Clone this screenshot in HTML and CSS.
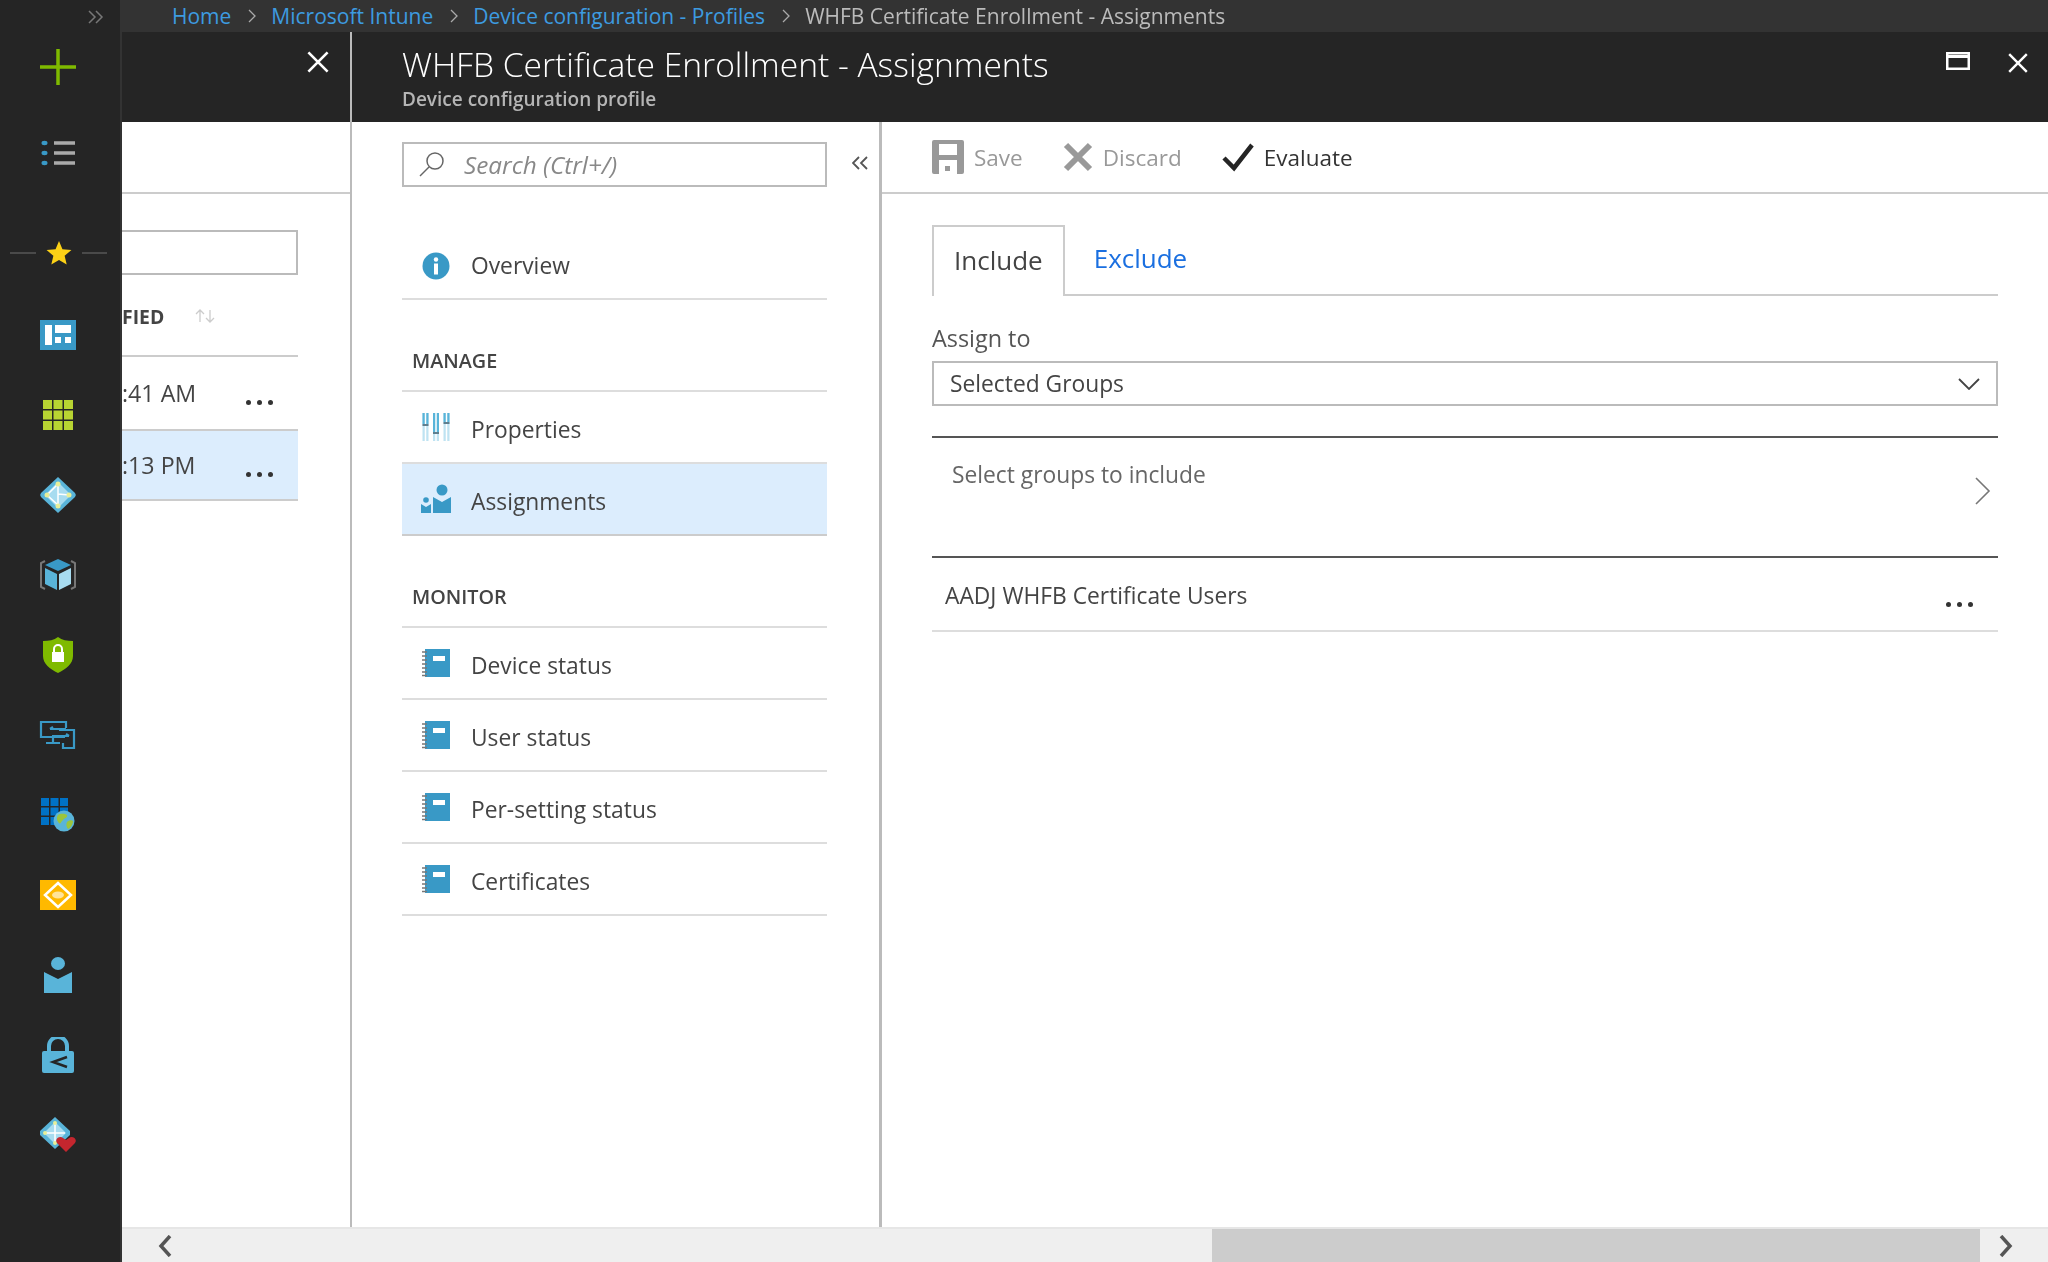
FILE: index.html
```html
<!DOCTYPE html>
<html lang="en">
<head>
  <meta charset="UTF-8">
  <title>WHFB Certificate Enrollment - Assignments</title>
  <link rel="stylesheet" href="styles.css">
</head>
<body>
  <svg class="sprites" width="0" height="0">
    <symbol id="notebook" viewBox="0 0 28 28">
      <rect x="3" y="0" width="25" height="28" fill="#3999c6"/>
      <path d="M0 3h5M0 7h5M0 11h5M0 15h5M0 19h5M0 23h5M0 26.500h5" stroke="#777" stroke-width="1.500"/>
      <rect x="11" y="7" width="12" height="5" fill="#fff"/>
    </symbol>
  </svg>

  <!-- Left icon rail -->
  <nav class="rail">
    <div class="rail-expand">
      <svg width="18" height="14" viewBox="0 0 18 14" fill="none" stroke="#777" stroke-width="1.500"><path d="M1 1l6 6-6 6M8 1l6 6-6 6"/></svg>
    </div>
    <div class="rail-item rail-plus">
      <svg width="36" height="36" viewBox="0 0 36 36"><path d="M0 18h36M18 0v36" stroke="#7fba00" stroke-width="3.500"/></svg>
    </div>
    <div class="rail-item rail-list">
      <svg width="34" height="26" viewBox="0 0 34 26">
        <g fill="#3999c6"><ellipse cx="3.500" cy="3" rx="3" ry="2.200"/><ellipse cx="3.500" cy="13" rx="3" ry="2.200"/><ellipse cx="3.500" cy="23" rx="3" ry="2.200"/></g>
        <path d="M13 3h21M13 13h21M13 23h21" stroke="#aaa" stroke-width="3.500"/>
      </svg>
    </div>
    <div class="rail-fav">
      <span class="rail-rule"></span>
      <svg width="26" height="26" viewBox="0 0 24 24"><path d="M12 1l3.200 7.500 8.300.7-6.300 5.400 1.900 8.100L12 18.500 4.900 22.700l1.900-8.100L.5 9.200l8.300-.7z" fill="#fcd116"/></svg>
      <span class="rail-rule"></span>
    </div>
    <div class="rail-item rail-first">
      <svg width="36" height="30" viewBox="0 0 36 30">
        <rect width="36" height="30" fill="#3999c6"/>
        <g fill="#fff"><rect x="5" y="5" width="7" height="20"/><rect x="15" y="5" width="16" height="8"/><rect x="15" y="17" width="6" height="6"/><rect x="25" y="17" width="6" height="6"/></g>
      </svg>
    </div>
    <div class="rail-item">
      <svg width="30" height="30" viewBox="0 0 30 30" fill="#b8d432">
        <rect width="9" height="9"/><rect x="10.500" width="9" height="9"/><rect x="21" width="9" height="9"/>
        <rect y="10.500" width="9" height="9"/><rect x="10.500" y="10.500" width="9" height="9"/><rect x="21" y="10.500" width="9" height="9"/>
        <rect y="21" width="9" height="9"/><rect x="10.500" y="21" width="9" height="9"/><rect x="21" y="21" width="9" height="9"/>
      </svg>
    </div>
    <div class="rail-item">
      <svg width="38" height="36" viewBox="0 0 38 36">
        <path d="M19 0l17 16a3 3 0 010 4L19 36 2 20a3 3 0 010-4z" fill="#59b4d9"/>
        <path d="M19 5l13 13-13 13L6 18z" fill="#a8dcf0"/>
        <path d="M19 7v21M8 18l11-11M8 18l11 10M19 17l11 1" stroke="#fff" stroke-width="1.500" fill="none"/>
        <g fill="#e8ef9a"><circle cx="19" cy="7" r="2.500"/><circle cx="8" cy="18" r="2.500"/><circle cx="30" cy="18" r="2.500"/><circle cx="19" cy="29" r="2.500"/></g>
      </svg>
    </div>
    <div class="rail-item">
      <svg width="38" height="34" viewBox="0 0 38 34">
        <path d="M6 3L2 5v24l4 2M32 3l4 2v24l-4 2" fill="none" stroke="#777" stroke-width="2"/>
        <path d="M19 1l13 6-13 6L6 7z" fill="#3999c6"/>
        <path d="M6 10l12 6v16L6 26z" fill="#59b4d9"/>
        <path d="M32 10l-12 6v16l12-6z" fill="#a8dcf0"/>
      </svg>
    </div>
    <div class="rail-item">
      <svg width="30" height="36" viewBox="0 0 30 36">
        <path d="M15 0c4 3 9 4 15 4v15c0 8-7 13-15 17C7 32 0 27 0 19V4c6 0 11-1 15-4z" fill="#7fba00"/>
        <rect x="9" y="15" width="12" height="10" fill="#fff"/>
        <path d="M11 15v-3a4 4 0 018 0v3" fill="none" stroke="#fff" stroke-width="2"/>
      </svg>
    </div>
    <div class="rail-item">
      <svg width="37" height="30" viewBox="0 0 37 30" fill="none" stroke="#3999c6" stroke-width="2.200">
        <path d="M26 17H2V2h25v6M14 17v5M7 23h14"/>
        <path d="M20 10h15v18H24v-5"/>
        <path d="M11 9h16M11 9l3-2M30 16H15l-2 0M30 16l-3-2"/>
      </svg>
    </div>
    <div class="rail-item">
      <svg width="34" height="34" viewBox="0 0 34 34">
        <g fill="#0072c6">
          <rect width="8" height="8"/><rect x="9.500" width="8" height="8"/><rect x="19" width="8" height="8"/>
          <rect y="9.500" width="8" height="8"/><rect x="9.500" y="9.500" width="8" height="8"/><rect x="19" y="9.500" width="8" height="8"/>
          <rect y="19" width="8" height="8"/><rect x="9.500" y="19" width="8" height="8"/>
        </g>
        <circle cx="23" cy="23" r="10.500" fill="#59b4d9"/>
        <path d="M17 17c3-2 7-1 9 0 1 3-3 3-4 5-2 1-2 5-4 3-2-2-3-5-1-8zM26 24c2-2 5-2 6-1 0 3-2 7-5 8-2-2-2-5-1-7z" fill="#9bc53d"/>
      </svg>
    </div>
    <div class="rail-item">
      <svg width="36" height="30" viewBox="0 0 36 30">
        <rect width="36" height="30" fill="#ffb900"/>
        <path d="M18 3l13 12-13 12L5 15z" fill="none" stroke="#fff" stroke-width="2.500"/>
        <ellipse cx="18" cy="15" rx="6" ry="3.500" fill="#ffe49a"/>
      </svg>
    </div>
    <div class="rail-item">
      <svg width="28" height="36" viewBox="0 0 28 36" fill="#59b4d9">
        <ellipse cx="14" cy="6.500" rx="7" ry="6.500"/>
        <path d="M0 15l14 7 14-7v21H0z"/>
      </svg>
    </div>
    <div class="rail-item">
      <svg width="32" height="36" viewBox="0 0 32 36">
        <path d="M7 16V9a9 9 0 0118 0v7" fill="none" stroke="#59b4d9" stroke-width="4"/>
        <rect y="14" width="32" height="22" rx="2" fill="#59b4d9"/>
        <path d="M25 20L11 25l14 5" fill="none" stroke="#252525" stroke-width="2.500"/>
      </svg>
    </div>
    <div class="rail-item">
      <svg width="38" height="36" viewBox="0 0 38 36">
        <path d="M16 0l15 14v4L16 32 1 18v-4z" fill="#59b4d9"/>
        <path d="M16 5l11 11-11 11L5 16z" fill="#a8dcf0"/>
        <path d="M16 6v20M6 16h20" stroke="#fff" stroke-width="1.500"/>
        <g fill="#e8ef9a"><circle cx="16" cy="6" r="2"/><circle cx="6" cy="16" r="2"/><circle cx="16" cy="26" r="2"/></g>
        <path d="M27 35l-9-9c-3-4 3-8 6-5l3 2 3-2c3-3 9 1 6 5z" fill="#c4262e"/>
      </svg>
    </div>
  </nav>

  <div class="main">
    <!-- Breadcrumb -->
    <div class="crumbs">
      <a class="crumb">Home</a>
      <svg class="crumb-sep" width="8" height="14" viewBox="0 0 8 14"><path d="M1 1l6 6-6 6" fill="none" stroke="#aaa" stroke-width="1.300"/></svg>
      <a class="crumb">Microsoft Intune</a>
      <svg class="crumb-sep" width="8" height="14" viewBox="0 0 8 14"><path d="M1 1l6 6-6 6" fill="none" stroke="#aaa" stroke-width="1.300"/></svg>
      <a class="crumb">Device configuration - Profiles</a>
      <svg class="crumb-sep" width="8" height="14" viewBox="0 0 8 14"><path d="M1 1l6 6-6 6" fill="none" stroke="#aaa" stroke-width="1.300"/></svg>
      <span class="crumb-current">WHFB Certificate Enrollment - Assignments</span>
    </div>

    <div class="blades">
      <!-- Blade behind, mostly scrolled out -->
      <section class="blade-back">
        <header class="blade-head back-head">
          <svg width="24" height="24" viewBox="0 0 20 20"><path d="M2 2l16 16M18 2L2 18" stroke="#fff" stroke-width="2.200"/></svg>
        </header>
        <div class="back-toolbar"></div>
        <div class="back-body">
          <div class="back-filter"></div>
          <div class="back-cols">
            <span class="col-name">FIED</span>
            <svg width="20" height="16" viewBox="0 0 20 16" fill="none" stroke="#ccc" stroke-width="1.300"><path d="M5 14V2M1 6l4-4 4 4M15 2v12M11 10l4 4 4-4"/></svg>
          </div>
          <div class="back-row"><span>:41 AM</span><span class="dots"><i></i><i></i><i></i></span></div>
          <div class="back-row is-selected"><span>:13 PM</span><span class="dots"><i></i><i></i><i></i></span></div>
        </div>
      </section>

      <section class="blade-front">
        <header class="blade-head front-head">
          <div class="title-wrap">
            <h1>WHFB Certificate Enrollment - Assignments</h1>
            <p>Device configuration profile</p>
          </div>
          <div class="window-btns">
            <svg width="24" height="18" viewBox="0 0 24 18" fill="none" stroke="#fff"><rect x="1.250" y="1.250" width="21.500" height="15.500" stroke-width="2.500"/><path d="M1 4.500h22" stroke-width="3"/></svg>
            <svg width="22" height="22" viewBox="0 0 20 20"><path d="M2 2l16 16M18 2L2 18" stroke="#fff" stroke-width="2.200"/></svg>
          </div>
        </header>

        <div class="front-body">
          <!-- Resource menu -->
          <aside class="menu">
            <div class="menu-top">
              <div class="search">
                <svg width="28" height="28" viewBox="0 0 28 28" fill="none" stroke="#666" stroke-width="1.500"><circle cx="17" cy="10" r="8"/><path d="M11 16L2 25"/></svg>
                <span>Search (Ctrl+/)</span>
              </div>
              <svg class="collapse" width="16" height="14" viewBox="0 0 16 14" fill="none" stroke="#555" stroke-width="1.800"><path d="M7 1L1 7l6 6M15 1L9 7l6 6"/></svg>
            </div>

            <a class="menu-item menu-overview">
              <svg width="28" height="28" viewBox="0 0 28 28"><circle cx="14" cy="14" r="13.500" fill="#3999c6"/><circle cx="14" cy="7.500" r="2.200" fill="#fff"/><rect x="12" y="11.500" width="4" height="11" fill="#fff"/></svg>
              <span>Overview</span>
            </a>

            <h2 class="menu-group">MANAGE</h2>
            <a class="menu-item">
              <svg width="28" height="28" viewBox="0 0 28 28">
                <path d="M3.500 0v28M14 0v28M24.500 0v28" stroke="#bfe3f2" stroke-width="6"/>
                <path d="M3.500 0v11M14 0v19M24.500 0v9" stroke="#59b4d9" stroke-width="6"/>
                <path d="M3.500 0v28M14 0v28M24.500 0v28" stroke="#fff" stroke-width="1.500"/>
                <path d="M0.500 12h6M11 20h6M21.500 10h6" stroke="#5f7f8f" stroke-width="2.200"/>
              </svg>
              <span>Properties</span>
            </a>
            <a class="menu-item is-active">
              <svg class="icon-wide" width="30" height="30" viewBox="0 0 30 30" fill="#3999c6">
                <circle cx="21" cy="6" r="5.500"/>
                <path d="M12 13l9 5 9-5v16H12z"/>
                <circle cx="5" cy="16" r="2.800"/>
                <path d="M0 20l5 3 5-3v9H0z"/>
              </svg>
              <span>Assignments</span>
            </a>

            <h2 class="menu-group">MONITOR</h2>
            <a class="menu-item"><svg width="28" height="28"><use href="#notebook"/></svg><span>Device status</span></a>
            <a class="menu-item"><svg width="28" height="28"><use href="#notebook"/></svg><span>User status</span></a>
            <a class="menu-item"><svg width="28" height="28"><use href="#notebook"/></svg><span>Per-setting status</span></a>
            <a class="menu-item"><svg width="28" height="28"><use href="#notebook"/></svg><span>Certificates</span></a>
          </aside>

          <!-- Assignments content -->
          <div class="content">
            <div class="toolbar">
              <button class="tool is-disabled">
                <svg width="32" height="34" viewBox="0 0 32 34"><path d="M2 0h28a2 2 0 012 2v30a2 2 0 01-2 2h-5V20H7v14H2a2 2 0 01-2-2V2a2 2 0 012-2zm5 4v11h18V4z" fill="#999"/><rect x="13" y="26" width="5" height="5" fill="#999"/></svg>
                Save
              </button>
              <button class="tool is-disabled">
                <svg width="30" height="30" viewBox="0 0 30 30"><path d="M3 3l24 24M27 3L3 27" stroke="#999" stroke-width="6"/></svg>
                Discard
              </button>
              <button class="tool">
                <svg width="32" height="30" viewBox="0 0 32 30"><path d="M2 16l10 10L30 3" fill="none" stroke="#252525" stroke-width="4.500"/></svg>
                Evaluate
              </button>
            </div>

            <div class="pane">
              <div class="tabs">
                <span class="tab is-current">Include</span>
                <span class="tab">Exclude</span>
              </div>

              <label class="field-label">Assign to</label>
              <div class="select">
                <span>Selected Groups</span>
                <svg width="22" height="12" viewBox="0 0 22 12"><path d="M1 1l10 10L21 1" fill="none" stroke="#444" stroke-width="1.800"/></svg>
              </div>

              <div class="picker">
                <span>Select groups to include</span>
                <svg width="16" height="30" viewBox="0 0 16 30"><path d="M1 2l13 13L1 28" fill="none" stroke="#777" stroke-width="1.600"/></svg>
              </div>

              <div class="group-row">
                <span>AADJ WHFB Certificate Users</span>
                <span class="dots"><i></i><i></i><i></i></span>
              </div>
            </div>
          </div>
        </div>
      </section>
    </div>

    <!-- Horizontal scrollbar -->
    <div class="hscroll">
      <svg width="18" height="22" viewBox="0 0 18 22"><path d="M14 1L5 11l9 10" fill="none" stroke="#555" stroke-width="3.500"/></svg>
      <div class="hscroll-track"><div class="hscroll-thumb"></div></div>
      <svg width="18" height="22" viewBox="0 0 18 22"><path d="M4 1l9 10-9 10" fill="none" stroke="#555" stroke-width="3.500"/></svg>
    </div>
  </div>
</body>
</html>
```

FILE: styles.css
```css
/* Global */
* {
  box-sizing: border-box;
}

html, body {
  height: 100%;
}

body {
  margin: 0;
  display: flex;
  overflow: hidden;
  font-family: 'Open Sans', 'Noto Sans', sans-serif;
  font-size: 22.800px;
  color: #444;
  background: #fff;
}

.sprites {
  position: absolute;
}

/* The screenshot is an upscaled capture, everything is a little soft */
.rail, .main {
  filter: blur(0.7px);
}

/* Icon rail */
.rail {
  width: 122px;
  flex: none;
  background: #252525;
  border-right: 2px solid #333;
  padding-right: 5px;
  display: flex;
  flex-direction: column;
  align-items: center;
}

.rail-expand {
  height: 24px;
  align-self: flex-end;
  padding: 0 9px 0 0;
}

.rail-item {
  height: 80px;
  display: flex;
  align-items: center;
  justify-content: center;
  flex: none;
}

.rail-plus {
  height: 86px;
}

.rail-list {
  margin-top: 3px;
}

.rail-fav {
  width: 100%;
  height: 40px;
  margin: 40px 0 22px;
  padding: 0 8px 0 10px;
  display: flex;
  align-items: center;
  gap: 10px;
  flex: none;
}

.rail-rule {
  flex: 1;
  height: 2px;
  background: #4a4a4a;
}

/* Main area */
.main {
  flex: 1;
  min-width: 0;
  display: flex;
  flex-direction: column;
}

.crumbs {
  height: 32px;
  flex: none;
  background: #333;
  padding-left: 50px;
  display: flex;
  align-items: center;
  white-space: nowrap;
  font-size: 21px;
}

.crumb {
  color: #3d9be0;
}

.crumb-sep {
  margin: 0 15px 0 17px;
}

.crumb-current {
  color: #bbb;
}

.blades {
  flex: 1;
  min-height: 0;
  display: flex;
}

.blade-head {
  height: 90px;
  background: #252525;
  flex: none;
}

/* Back blade */
.blade-back {
  width: 228px;
  flex: none;
  display: flex;
  flex-direction: column;
}

.back-head {
  display: flex;
  justify-content: flex-end;
  padding: 18px 20px 0 0;
}

.back-toolbar {
  height: 72px;
  flex: none;
  border-bottom: 2px solid #ccc;
}

.back-body {
  flex: 1;
  padding-right: 52px;
}

.back-filter {
  height: 45px;
  margin-top: 36px;
  border: 2px solid #bbb;
  border-left: none;
}

.back-cols {
  height: 82px;
  padding-top: 2px;
  display: flex;
  align-items: center;
  gap: 31px;
  border-bottom: 2px solid #ccc;
}

.col-name {
  font-size: 19.400px;
  font-weight: 700;
}

.back-row {
  height: 72px;
  display: flex;
  align-items: center;
  justify-content: space-between;
  padding-right: 25px;
  font-size: 23.200px;
}

.back-row.is-selected {
  background: #dcedfd;
  border-top: 2px solid #ccc;
  border-bottom: 2px solid #ccc;
}

.dots {
  display: flex;
  gap: 6px;
  padding-top: 18px;
}

.dots i {
  width: 5px;
  height: 5px;
  border-radius: 50%;
  background: #333;
}

/* Front blade */
.blade-front {
  flex: 1;
  min-width: 0;
  display: flex;
  flex-direction: column;
  border-left: 2px solid #bbb;
}

.front-head {
  display: flex;
  justify-content: space-between;
  padding: 0 19px 0 50px;
}

.title-wrap h1 {
  margin: 0;
  padding-top: 8px;
  font-size: 33.600px;
  font-weight: 300;
  line-height: 48px;
  color: #fff;
  white-space: nowrap;
}

.title-wrap p {
  margin: -1px 0 0;
  font-size: 19px;
  font-weight: 600;
  line-height: 24px;
  color: #b5b5b5;
}

.window-btns {
  display: flex;
  gap: 37px;
  padding-top: 20px;
}

.front-body {
  flex: 1;
  min-height: 0;
  display: flex;
}

/* Menu */
.menu {
  width: 530px;
  flex: none;
  padding: 0 52px 0 50px;
  border-right: 3px solid #bbb;
  position: relative;
}

.menu-top {
  height: 65px;
  padding-top: 20px;
}

.search {
  height: 45px;
  border: 2px solid #bbb;
  padding-left: 14px;
  display: flex;
  align-items: center;
  gap: 18px;
  font-size: 24.300px;
  font-style: italic;
  color: #888;
}

.collapse {
  position: absolute;
  right: 11px;
  top: 34px;
}

.menu-item {
  height: 72px;
  padding-left: 20px;
  display: flex;
  align-items: center;
  gap: 21px;
  border-bottom: 2px solid #ddd;
}

.menu-item span {
  padding-top: 5px;
}

.menu-item svg {
  flex: none;
}

.menu-item .icon-wide {
  margin: 0 -1px;
}

.menu-overview {
  margin-top: 46px;
  height: 67px;
}

.menu-overview span {
  padding-top: 0;
}

.menu-group {
  margin: 0;
  height: 92px;
  padding: 46px 0 0 10px;
  font-size: 19.800px;
  font-weight: 600;
  line-height: 30px;
  border-bottom: 2px solid #ddd;
}

.menu-item.is-active {
  background: #dcedfd;
  border-bottom: 2px solid #ccc;
}

/* Content */
.content {
  flex: 1;
  min-width: 0;
}

.toolbar {
  height: 72px;
  padding-left: 50px;
  display: flex;
  align-items: center;
  gap: 40px;
  border-bottom: 2px solid #ccc;
}

.tool {
  display: flex;
  align-items: center;
  gap: 10px;
  padding: 0;
  border: none;
  background: none;
  font: inherit;
  font-size: 22.500px;
  color: #333;
}

.tool.is-disabled {
  color: #999;
}

.pane {
  padding: 31px 50px 0;
}

.tabs {
  height: 71px;
  display: flex;
  border-bottom: 2px solid #ccc;
}

.tab {
  padding: 15px 20px 0;
  font-size: 26px;
  color: #1a6fe0;
}

.tab + .tab {
  margin-left: 9px;
}

.tab.is-current {
  color: #444;
  margin-bottom: -2px;
  background: #fff;
  border: 2px solid #ccc;
  border-bottom: none;
}

.field-label {
  display: block;
  margin-top: 28px;
  line-height: 28px;
  font-size: 23.400px;
  color: #555;
}

.select {
  height: 45px;
  margin-top: 9px;
  padding: 0 16px 0 16px;
  border: 2px solid #bbb;
  display: flex;
  align-items: center;
  justify-content: space-between;
}

.picker {
  height: 122px;
  margin-top: 30px;
  padding: 21px 7px 0 20px;
  border-top: 2px solid #555;
  border-bottom: 2px solid #555;
  display: flex;
  justify-content: space-between;
  color: #666;
}

.picker svg {
  margin-top: 17px;
}

.group-row {
  height: 74px;
  padding: 2px 25px 0 13px;
  display: flex;
  align-items: center;
  justify-content: space-between;
  border-bottom: 2px solid #ddd;
}

/* Scrollbar */
.hscroll {
  height: 35px;
  flex: none;
  background: #efefef;
  display: flex;
  align-items: center;
  padding: 0 33px 0 34px;
  border-top: 2px solid #e6e6e6;
}

.hscroll-track {
  flex: 1;
  height: 100%;
}

.hscroll-thumb {
  width: 768px;
  height: 100%;
  margin-left: 1038px;
  background: #ccc;
}
```
